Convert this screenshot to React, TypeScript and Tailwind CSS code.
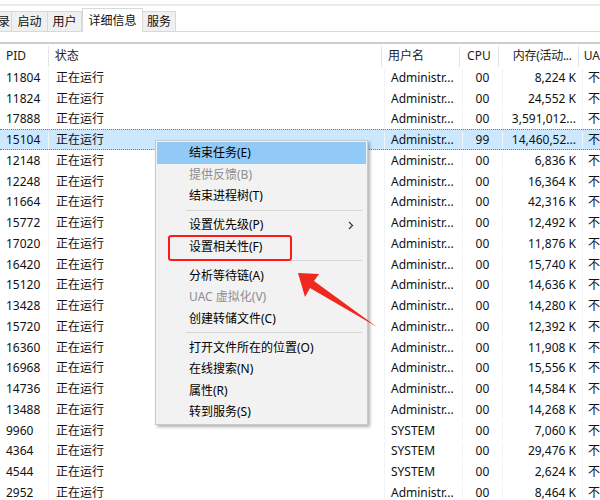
const rows: [string, string, string, string][] = [
  ["11804", "Administr...", "00", "8,224 K"],
  ["11824", "Administr...", "00", "24,552 K"],
  ["17888", "Administr...", "00", "3,591,012..."],
  ["15104", "Administr...", "99", "14,460,52..."],
  ["12148", "Administr...", "00", "6,836 K"],
  ["12248", "Administr...", "00", "16,364 K"],
  ["11664", "Administr...", "00", "42,316 K"],
  ["15772", "Administr...", "00", "12,492 K"],
  ["17020", "Administr...", "00", "11,876 K"],
  ["16420", "Administr...", "00", "15,740 K"],
  ["15120", "Administr...", "00", "14,636 K"],
  ["13428", "Administr...", "00", "14,280 K"],
  ["15720", "Administr...", "00", "12,392 K"],
  ["16360", "Administr...", "00", "11,908 K"],
  ["16968", "Administr...", "00", "15,556 K"],
  ["14736", "Administr...", "00", "14,584 K"],
  ["13488", "Administr...", "00", "14,268 K"],
  ["9960", "SYSTEM", "00", "7,060 K"],
  ["4364", "SYSTEM", "00", "29,476 K"],
  ["4544", "SYSTEM", "00", "2,624 K"],
  ["2952", "Administr...", "00", "8,464 K"],
];

type MenuEntry = { label: string; disabled?: boolean; active?: boolean; sub?: boolean } | "sep";

const menu: MenuEntry[] = [
  { label: "结束任务(E)", active: true },
  { label: "提供反馈(B)", disabled: true },
  { label: "结束进程树(T)" },
  "sep",
  { label: "设置优先级(P)", sub: true },
  { label: "设置相关性(F)" },
  "sep",
  { label: "分析等待链(A)" },
  { label: "UAC 虚拟化(V)", disabled: true },
  { label: "创建转储文件(C)" },
  "sep",
  { label: "打开文件所在的位置(O)" },
  { label: "在线搜索(N)" },
  { label: "属性(R)" },
  { label: "转到服务(S)" },
];

function Tab({ label, w, selected }: { label: string; w: string; selected?: boolean }) {
  if (selected) {
    return (
      <div className={`${w} h-[24px] mb-[-1px] bg-white border border-b-0 border-[#d9d9d9] flex items-center justify-center text-[12px] text-[#111]`}>
        {label}
      </div>
    );
  }
  return (
    <div className={`${w} h-[20px] bg-[#f0f0f0] border border-b-0 border-l-0 border-[#d9d9d9] flex items-center justify-center text-[12px] text-[#111]`}>
      {label}
    </div>
  );
}

export default function App() {
  return (
    <div className="relative w-[600px] h-[500px] overflow-hidden bg-white font-['Noto_Sans','Noto_Sans_CJK_SC',sans-serif] text-[12px] text-[#111]">
      <div className="h-[4px]" />
      <div className="h-[2px] bg-[#ececec]" />
      {/* tabs */}
      <div className="h-[26px] flex items-end border-b border-[#d9d9d9]">
        <div className="w-[12px] h-[20px] bg-[#f0f0f0] border-t border-r border-[#d9d9d9] flex items-center justify-end overflow-hidden text-[12px]">
          <span className="pr-[1px]">录</span>
        </div>
        <Tab label="启动" w="w-[36px]" />
        <Tab label="用户" w="w-[34px]" />
        <Tab label="详细信息" w="w-[61px]" selected />
        <Tab label="服务" w="w-[33px]" />
      </div>
      <div className="h-[9.5px]" />

      {/* header */}
      <div className="h-[25px] pt-[2px] border-t-2 border-[#cdcdcd] flex text-[#222]">
        <div className="w-[49px] pl-[6px] flex items-center border-r border-[#e5e5e5]">PID</div>
        <div className="w-[336px] pl-[6px] flex items-center border-r border-[#e5e5e5]">状态</div>
        <div className="w-[78px] pl-[6px] flex items-center border-r border-[#e5e5e5]">用户名</div>
        <div className="w-[40px] flex items-center justify-center border-r border-[#e5e5e5]">CPU</div>
        <div className="w-[80px] pr-[6px] flex items-center justify-end border-r border-[#e5e5e5] tracking-[-0.3px]">内存(活动...</div>
        <div className="flex-1 pl-[5px] flex items-center">UA</div>
      </div>

      {/* rows */}
      <div>
        {rows.map(([pid, user, cpu, mem], i) => (
          <div
            key={pid}
            className={
              i === 3
                ? "h-[20.75px] pt-[2px] flex bg-[#cce8ff] border-y border-dotted border-[#777]"
                : "h-[20.75px] pt-[2px] flex"
            }
          >
            <div className="w-[49px] pl-[6px] flex items-center border-r border-[#f1f3f7]">{pid}</div>
            <div className="w-[336px] pl-[7px] flex items-center border-r border-[#f1f3f7]">正在运行</div>
            <div className="w-[78px] pl-[6px] flex items-center border-r border-[#f1f3f7]">{user}</div>
            <div className="w-[40px] flex items-center justify-center border-r border-[#f1f3f7]">{cpu}</div>
            <div className="w-[80px] pr-[6px] flex items-center justify-end border-r border-[#f1f3f7] whitespace-nowrap">{mem}</div>
            <div className="flex-1 pl-[5px] flex items-center">不</div>
          </div>
        ))}
      </div>

      {/* context menu */}
      <div className="absolute left-[155px] top-[140px] w-[213px] bg-[#f2f2f2] border border-[#c9c9c9] p-[1px] shadow-[2px_2px_3px_rgba(0,0,0,0.3)]">
        {menu.map((m, i) =>
          m === "sep" ? (
            <div key={i} className="h-[7.5px] flex items-center pl-[29px] pr-[4px]">
              <div className="h-px w-full bg-[#d7d7d7]" />
            </div>
          ) : (
            <div
              key={i}
              className={`h-[21.5px] pt-[1px] flex items-center pl-[32px] pr-[10px] ${m.active ? "bg-[#91c9f7]" : ""} ${
                m.disabled ? "text-[#8d8d8d]" : "text-[#000]"
              }`}
            >
              <span className="flex-1">{m.label}</span>
              {m.sub && (
                <svg width="6" height="9" viewBox="0 0 6 9" className="mr-[2px]">
                  <path d="M1 1 L4.5 4.5 L1 8" fill="none" stroke="#333" strokeWidth="1.2" />
                </svg>
              )}
            </div>
          )
        )}
      </div>

      {/* highlight box */}
      <div className="absolute left-[168px] top-[235px] w-[124px] h-[26px] border-2 border-[#ff1a1a] rounded-[3px]" />

      {/* arrow */}
      <svg className="absolute left-0 top-0" width="600" height="500" viewBox="0 0 600 500">
        <polygon
          points="298,273 319,274 314,281 377,327 310,288 305,297"
          fill="#f0281e"
        />
      </svg>
    </div>
  );
}
